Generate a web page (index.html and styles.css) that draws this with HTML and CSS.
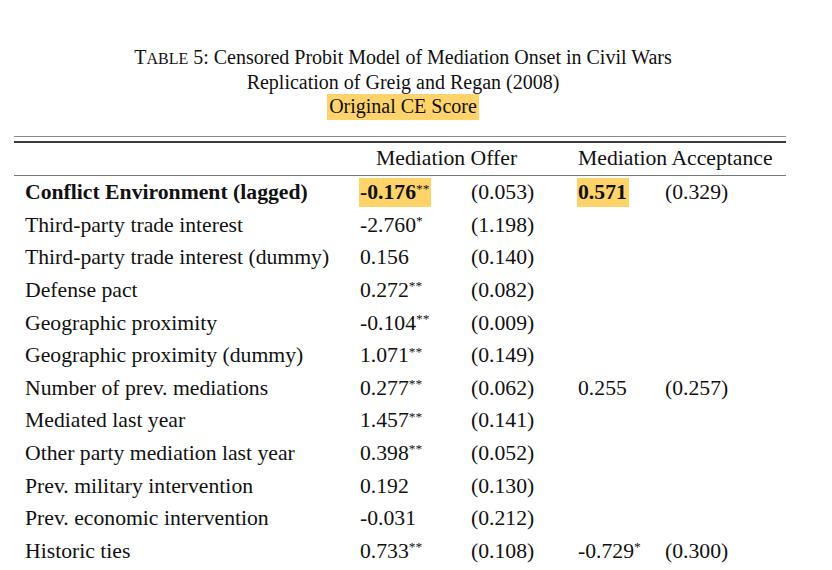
FILE: index.html
```html
<!DOCTYPE html>
<html>
<head>
<meta charset="utf-8">
<link rel="stylesheet" href="styles.css">
</head>
<body>
<div class="page">
  <div class="caption">
    <div class="cap-line"><span class="sc">T<span class="small">ABLE</span></span> 5: Censored Probit Model of Mediation Onset in Civil Wars</div>
    <div class="cap-line">Replication of Greig and Regan (2008)</div>
    <div class="cap-line"><span class="hl hl-cap">Original CE Score</span></div>
  </div>
  <div class="rule-top"></div>
  <div class="rule-top2"></div>
  <table class="tbl">
    <colgroup>
      <col class="c1"><col class="c2"><col class="c3"><col class="c4"><col class="c5">
    </colgroup>
    <thead>
      <tr class="head">
        <th></th>
        <th colspan="2" class="h-offer">Mediation Offer</th>
        <th colspan="2" class="h-acc">Mediation Acceptance</th>
      </tr>
    </thead>
    <tbody>
      <tr class="bold-row"><td class="lab">Conflict Environment (lagged)</td><td><span class="hl hl-cell"><b>-0.176</b><sup>**</sup></span></td><td>(0.053)</td><td><span class="hl hl-cell"><b>0.571</b></span></td><td>(0.329)</td></tr>
      <tr><td class="lab">Third-party trade interest</td><td>-2.760<sup>*</sup></td><td>(1.198)</td><td></td><td></td></tr>
      <tr><td class="lab">Third-party trade interest (dummy)</td><td>0.156</td><td>(0.140)</td><td></td><td></td></tr>
      <tr><td class="lab">Defense pact</td><td>0.272<sup>**</sup></td><td>(0.082)</td><td></td><td></td></tr>
      <tr><td class="lab">Geographic proximity</td><td>-0.104<sup>**</sup></td><td>(0.009)</td><td></td><td></td></tr>
      <tr><td class="lab">Geographic proximity (dummy)</td><td>1.071<sup>**</sup></td><td>(0.149)</td><td></td><td></td></tr>
      <tr><td class="lab">Number of prev. mediations</td><td>0.277<sup>**</sup></td><td>(0.062)</td><td>0.255</td><td>(0.257)</td></tr>
      <tr><td class="lab">Mediated last year</td><td>1.457<sup>**</sup></td><td>(0.141)</td><td></td><td></td></tr>
      <tr><td class="lab">Other party mediation last year</td><td>0.398<sup>**</sup></td><td>(0.052)</td><td></td><td></td></tr>
      <tr><td class="lab">Prev. military intervention</td><td>0.192</td><td>(0.130)</td><td></td><td></td></tr>
      <tr><td class="lab">Prev. economic intervention</td><td>-0.031</td><td>(0.212)</td><td></td><td></td></tr>
      <tr><td class="lab">Historic ties</td><td>0.733<sup>**</sup></td><td>(0.108)</td><td>-0.729<sup>*</sup></td><td>(0.300)</td></tr>
    </tbody>
  </table>
</div>
</body>
</html>
```
FILE: styles.css
```css
html, body {
  margin: 0;
  padding: 0;
  background: #ffffff;
}
body {
  font-family: "Liberation Serif", "Times New Roman", serif;
  color: #111;
  width: 832px;
  height: 570px;
  overflow: hidden;
}
.page {
  padding: 45px 0 0 14px;
  width: 772px;
}
.caption {
  font-size: 20px;
  text-align: center;
  margin-left: 6px;
}
.cap-line {
  height: 24.5px;
  line-height: 24.5px;
}
.small {
  font-size: 0.8em;
}
.hl {
  background: #fdd36a;
}
.hl-cap {
  padding: 1px 2px 3px 2px;
}
.rule-top {
  margin-top: 17px;
  height: 1px;
  background: #8a8a8a;
}
.rule-top2 {
  margin-top: 4px;
  height: 2px;
  background: #3c3c3c;
}
.tbl {
  width: 772px;
  border-collapse: collapse;
  table-layout: fixed;
  font-size: 21.7px;
}
.c1 { width: 346px; }
.c2 { width: 111px; }
.c3 { width: 107px; }
.c4 { width: 87px; }
.c5 { width: 121px; }
.tbl th {
  font-weight: normal;
  text-align: left;
  padding: 0;
  height: 32px;
  border-bottom: 1px solid #777;
  vertical-align: middle;
}
.h-offer {
  padding-left: 16px !important;
}
.tbl td {
  padding: 0;
  height: 32.6px;
  text-align: left;
  vertical-align: middle;
  white-space: nowrap;
}
.bold-row td {
  padding-top: 1px;
}
.tbl td.lab {
  padding-left: 11px;
}
.bold-row .lab {
  font-weight: bold;
}
.hl-cell {
  padding: 2px 2px 3px 1px;
  margin-left: -1px;
}
sup {
  font-size: 0.62em;
  vertical-align: 0;
  position: relative;
  top: -0.5em;
  line-height: 0;
}
```
